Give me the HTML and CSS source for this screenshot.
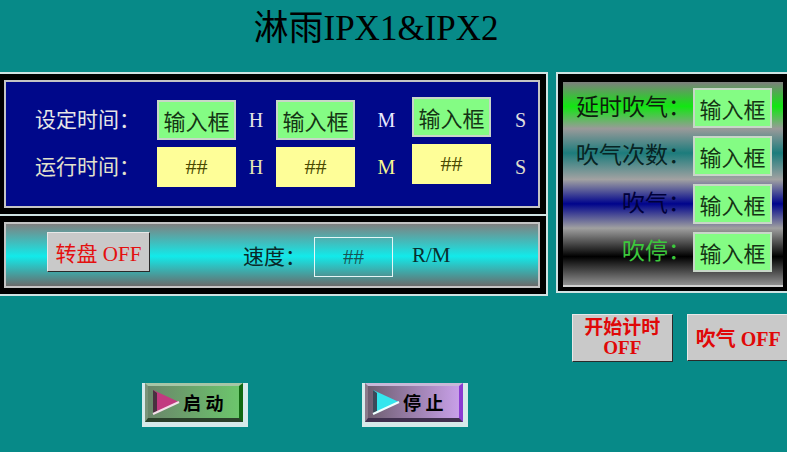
FILE: index.html
```html
<!DOCTYPE html>
<html>
<head>
<meta charset="utf-8">
<link rel="stylesheet" href="styles.css">
</head>
<body>
<div class="screen">
  <header class="title">淋雨IPX1&amp;IPX2</header>
  <div class="main">
    <div class="leftcol">
      <section class="frame frame-time">
        <div class="inner blue">
          <div class="time-grid">
            <span class="lbl lbl-set">设定时间：</span>
            <span class="box green">输入框</span>
            <span class="unit u-h1">H</span>
            <span class="box green">输入框</span>
            <span class="unit u-m u-m1">M</span>
            <span class="box green raised">输入框</span>
            <span class="unit u-s u-s1">S</span>

            <span class="lbl lbl-run">运行时间：</span>
            <span class="box yellow">##</span>
            <span class="unit u-h2">H</span>
            <span class="box yellow">##</span>
            <span class="unit u-m u-m2">M</span>
            <span class="box yellow raised">##</span>
            <span class="unit u-s u-s2">S</span>
          </div>
        </div>
      </section>
      <section class="frame frame-speed">
        <div class="inner cyan">
          <div class="btn turn">转盘 OFF</div>
          <span class="speed-lbl">速度：</span>
          <span class="box outline">##</span>
          <span class="rm">R/M</span>
        </div>
      </section>
    </div>
    <div class="rightcol">
      <section class="frame frame-blow">
        <div class="stripes">
          <div class="blow-grid">
            <span class="blbl b1">延时吹气：</span>
            <span class="box green">输入框</span>
            <span class="blbl b2">吹气次数：</span>
            <span class="box green">输入框</span>
            <span class="blbl b3">吹气：</span>
            <span class="box green">输入框</span>
            <span class="blbl b4">吹停：</span>
            <span class="box green">输入框</span>
          </div>
        </div>
      </section>
      <div class="toggles">
        <div class="btn tog t1"><span>开始计时</span><span>OFF</span></div>
        <div class="btn tog t2">吹气 OFF</div>
      </div>
    </div>
  </div>
  <div class="actions">
    <div class="pbtn">
      <div class="face face-start">
        <svg class="tri" width="28" height="26" viewBox="0 0 28 26">
          <polygon points="1,1 27,13 1,25" fill="#c23a80"/>
          <polygon points="1,1 5,4 5,22 1,25" fill="#4a3040"/>
          <line x1="1" y1="25" x2="27" y2="13" stroke="#f4e0ea" stroke-width="2"/>
        </svg>
        <span class="ptext">启 动</span>
      </div>
    </div>
    <div class="pbtn">
      <div class="face face-stop">
        <svg class="tri" width="28" height="26" viewBox="0 0 28 26">
          <polygon points="1,1 27,13 1,25" fill="#34e6ee"/>
          <polygon points="1,1 5,4 5,22 1,25" fill="#3a4a5a"/>
          <line x1="1" y1="25" x2="27" y2="13" stroke="#f0ffff" stroke-width="2"/>
        </svg>
        <span class="ptext">停 止</span>
      </div>
    </div>
  </div>
</div>
</body>
</html>
```

FILE: styles.css
```css
html, body {
  margin: 0;
  padding: 0;
}

body {
  width: 787px;
  height: 452px;
  overflow: hidden;
  background: #078a88;
  font-family: "Liberation Serif", "Noto Sans CJK SC", serif;
}

.screen {
  width: 787px;
  height: 452px;
  overflow: hidden;
}

.title {
  width: 752px;
  height: 63px;
  padding-top: 9px;
  line-height: 40px;
  text-align: center;
  font-size: 35px;
  color: #000;
}

.main {
  display: flex;
  align-items: flex-start;
}

.leftcol {
  flex: none;
  width: 552px;
  margin-left: -4px;
}

.frame {
  border: 2px solid #cfe3e3;
  background: #000;
  padding: 6px;
}

.frame-speed {
  border-top: 0;
}

.inner {
  border: 2px solid #c4c4c4;
}

.blue {
  background: #00088a;
  height: 124px;
}

.time-grid {
  display: grid;
  grid-template-columns: 151px 79px 40px 79px 57px 79px 1fr;
  grid-template-rows: 40px 40px;
  row-gap: 7px;
  padding-top: 18px;
  align-items: center;
}

.lbl {
  padding-left: 29px;
  font-size: 21px;
  line-height: 40px;
  white-space: nowrap;
}

.lbl-set { color: #e6e6e6; }
.lbl-run { color: #e2e2cc; }

.unit {
  font-size: 20px;
  text-align: center;
  line-height: 40px;
}

.u-m { padding-left: 6px; }
.u-s { text-align: left; padding-left: 24px; }

.u-h1 { color: #e4e4e4; }
.u-m1 { color: #e8e8ff; }
.u-s1 { color: #e0e0e0; }
.u-h2 { color: #e6e6b4; }
.u-m2 { color: #f8f890; }
.u-s2 { color: #e0e0cc; }

.box {
  box-sizing: border-box;
  width: 79px;
  height: 40px;
  display: flex;
  align-items: center;
  justify-content: center;
  white-space: nowrap;
}

.green {
  background: #84fc84;
  border: 2px solid #c8d6c8;
  color: #143414;
  font-size: 22px;
}

.yellow {
  background: #fefe98;
  color: #4a4a00;
  font-size: 22px;
}

.raised {
  align-self: start;
  margin-top: -3px;
}

.cyan {
  height: 62px;
  background: linear-gradient(#808080, #12eaea 52%, #6a6a6a);
  display: flex;
  align-items: center;
}

.btn {
  box-sizing: border-box;
  background: #c9c9c9;
  border: 1px solid;
  border-color: #e8e8e8 #2a2a2a #2a2a2a #e8e8e8;
  color: #e41010;
  display: flex;
  align-items: center;
  justify-content: center;
  white-space: nowrap;
}

.turn {
  width: 103px;
  height: 40px;
  margin-left: 41px;
  margin-top: -6px;
  font-size: 21px;
}

.speed-lbl {
  margin-left: 93px;
  font-size: 21px;
  color: #0a2828;
}

.outline {
  margin-left: 8px;
  margin-top: 4px;
  border: 1px solid #e6f6f6;
  color: #1a5454;
  font-size: 21px;
}

.rm {
  margin-left: 19px;
  font-size: 21px;
  color: #0a2e2e;
}

.rightcol {
  flex: none;
  width: 234px;
  margin-left: 8px;
}

.frame-blow {
  padding: 8px 5px 4px 5px;
}

.stripes {
  height: 203px;
  border-bottom: 2px solid #d0d0d0;
  background: linear-gradient(
    #7e7e7e 0%,
    #12e612 12%,
    #9a9a9a 23%,
    #1c7c7c 35%,
    #a2a2a2 48%,
    #00048c 60%,
    #a0a0a0 72%,
    #000000 86%,
    #909090 100%
  );
}

.blow-grid {
  display: grid;
  grid-template-columns: 128px 79px;
  grid-auto-rows: 40px;
  column-gap: 2px;
  row-gap: 8px;
  padding-top: 6px;
  align-items: center;
}

.blbl {
  text-align: right;
  font-size: 23px;
  line-height: 40px;
  white-space: nowrap;
}

.b1 { color: #0e1e0e; }
.b2 { color: #082424; }
.b3 { color: #00003a; }
.b4 { color: #3cc83c; }

.toggles {
  display: flex;
  gap: 14px;
  margin-top: 21px;
  padding-left: 16px;
}

.tog {
  font-weight: bold;
  color: #e00808;
}

.t1 {
  width: 101px;
  height: 48px;
  flex-direction: column;
  font-size: 19px;
  line-height: 20px;
}

.t2 {
  width: 104px;
  height: 47px;
  font-size: 20px;
}

.actions {
  display: flex;
  gap: 114px;
  margin-top: 21px;
  padding-left: 142px;
}

.pbtn {
  box-sizing: border-box;
  width: 106px;
  height: 44px;
  background: #d6eaea;
  padding: 0 5px 5px 3px;
}

.face {
  box-sizing: border-box;
  height: 100%;
  border-style: solid;
  border-width: 3px 4px 4px 3px;
  display: flex;
  align-items: center;
}

.face-start {
  border-color: #a6c6a6 #106810 #2a402a #7a947a;
  background: linear-gradient(90deg, #6a866a, #6cc66c);
}

.face-stop {
  border-color: #c8b8d8 #8a3cd2 #40304e #8a7a8a;
  background: linear-gradient(90deg, #6e5e70, #c8a0e8);
}

.tri {
  margin-left: 4px;
  flex: none;
}

.ptext {
  margin-left: 3px;
  font-size: 18px;
  font-weight: bold;
  color: #000;
  white-space: nowrap;
}
```
